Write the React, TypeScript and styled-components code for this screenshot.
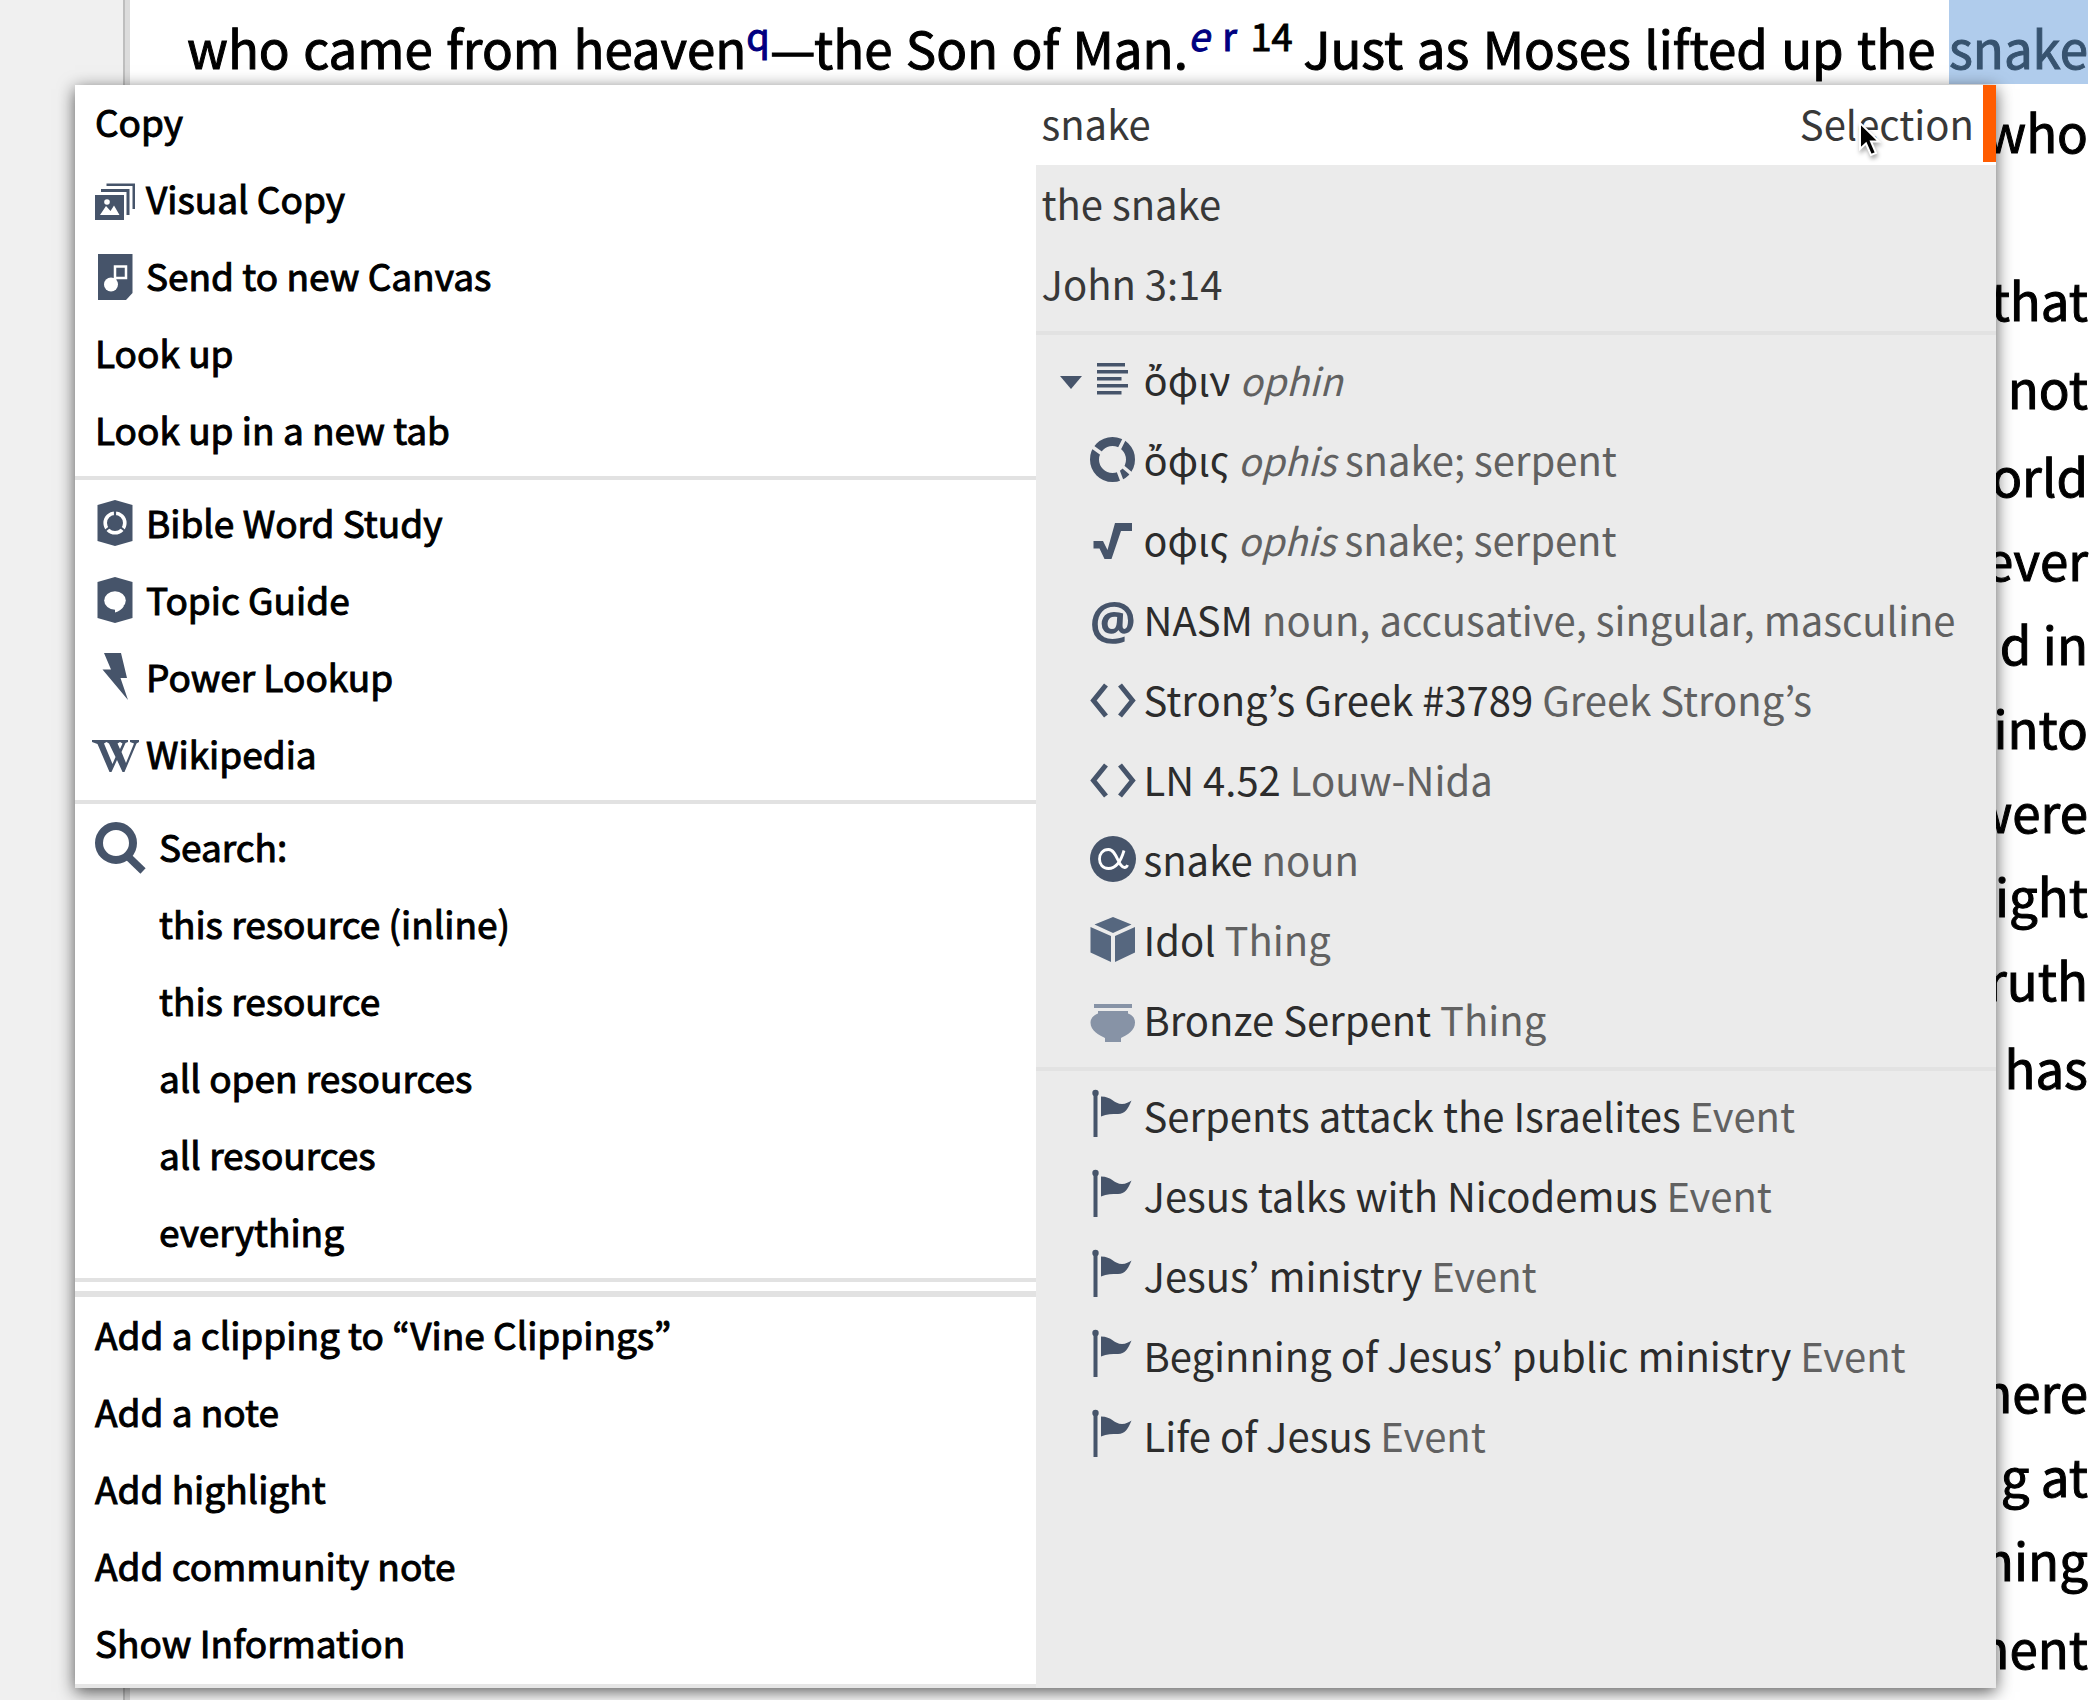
import React from "react";
import styled, { createGlobalStyle } from "styled-components";

const INK = "#46546a";

const GlobalStyle = createGlobalStyle`
  *, *::before, *::after { box-sizing: border-box; }
  body {
    margin: 0;
    background: #fff;
    font-family: "Noto Sans CJK JP", "Noto Sans", "Open Sans", sans-serif;
  }
`;

const Page = styled.div`
  position: relative;
  display: flex;
  min-height: 100vh;
  overflow: hidden;
`;

const Gutter = styled.aside`
  flex: 0 0 130px;
  background: #f0f0f0;
  border-right: 5px solid #dcdcdc;
  box-shadow: inset -2px 0 0 #bebebe;
`;

const Passage = styled.main`
  flex: 1;
  min-width: 0;
  padding: 5px 12px 0 57px;
  color: #000;
  font-size: 51px;
  font-weight: 400;
  -webkit-text-stroke-width: 1px;
`;

const Line = styled.p<{ $tall?: boolean; $full?: boolean; $before?: number }>`
  margin: ${(p) => p.$before ?? 0}px 0 0;
  height: ${(p) => (p.$tall ? 88 : 84)}px;
  padding-top: ${(p) => (p.$tall ? 4 : 0)}px;
  line-height: 84px;
  white-space: nowrap;
  text-align: right;
  text-align-last: ${(p) => (p.$full ? "justify" : "right")};
`;

const Raised = styled.span`
  position: relative;
  top: -18px;
  font-size: 38px;
  line-height: 1;
`;

const NoteLink = styled.a<{ $italic?: boolean }>`
  position: relative;
  top: -18px;
  color: #000080;
  font-size: 38px;
  font-style: ${(p) => (p.$italic ? "italic" : "normal")};
  line-height: 1;
  text-decoration: none;
`;

const Highlight = styled.mark`
  padding-top: 12px;
  background: #b0ccec;
  color: #37536f;
`;

const Menu = styled.div`
  position: absolute;
  top: 85px;
  left: 75px;
  right: 104px;
  display: grid;
  grid-template-columns: 1fr 1fr;
  background: #fff;
  box-shadow: 0 4px 16px rgba(0, 0, 0, 0.65);
`;

const Actions = styled.div`
  display: flex;
  flex-direction: column;
  padding-bottom: 1px;
  border-bottom: 4px solid #e6e6e6;
`;

const Targets = styled.div`
  display: flex;
  flex-direction: column;
  background: #ebebeb;
`;

const Divider = styled.hr<{ $heavy?: boolean }>`
  width: 100%;
  height: ${(p) => (p.$heavy ? 6 : 4)}px;
  margin: ${(p) => (p.$heavy ? "3px 0 1px" : "6px 0")};
  border: 0;
  background: #e2e2e2;
`;

const Action = styled.button<{ $indent?: boolean; $wide?: boolean }>`
  display: flex;
  align-items: center;
  gap: ${(p) => (p.$wide ? 12 : 11)}px;
  height: 77px;
  padding: 0 20px 5px ${(p) => (p.$indent ? 84 : 20)}px;
  border: 0;
  background: none;
  color: #000;
  font: 400 37px/72px "Noto Sans CJK JP", "Noto Sans", sans-serif;
  -webkit-text-stroke-width: 1px;
  text-align: left;
  white-space: nowrap;
`;

const Target = styled.button<{ $selected?: boolean; $nested?: boolean }>`
  position: relative;
  display: flex;
  align-items: center;
  justify-content: space-between;
  height: 80px;
  padding: 0 22px 4px ${(p) => (p.$nested ? 54 : 6)}px;
  border: 0;
  background: ${(p) => (p.$selected ? "#fff" : "none")};
  color: ${(p) => (p.$nested ? "#2c2c2c" : "#383838")};
  font: 400 40px/74px "Noto Sans CJK JP", "Noto Sans", sans-serif;
  text-align: left;
  white-space: nowrap;
`;

const SelectedBar = styled.span`
  position: absolute;
  top: 0;
  right: 0;
  width: 13px;
  height: 77px;
  background: #ff5c00;
`;

const Caret = styled.span`
  position: absolute;
  top: 35px;
  left: 24px;
  border: solid transparent;
  border-width: 13px 11px 0;
  border-top-color: ${INK};
`;

const Entry = styled.span`
  display: flex;
  align-items: center;
  gap: 8px;
`;

const Detail = styled.span`
  color: #616161;
`;

const Translit = styled.i`
  font-size: 38px;
`;

const AtMark = styled.span`
  width: 46px;
  color: ${INK};
  font-family: "Open Sans", "Noto Sans", sans-serif;
  font-size: 52px;
  font-weight: 700;
  line-height: 50px;
`;

const Glyph = styled.svg`
  display: block;
  flex: none;
  overflow: visible;
`;

const Pointer = styled.svg`
  position: absolute;
  top: 120px;
  right: 218px;
  filter: drop-shadow(1px 3px 2px rgba(0, 0, 0, 0.35));
`;

const SmallIcon = ({ children }: { children: React.ReactNode }) => (
  <Glyph width="40" height="50" viewBox="0 -1 40 50" fill={INK} aria-hidden="true">
    {children}
  </Glyph>
);

const EntryIcon = ({ children }: { children: React.ReactNode }) => (
  <Glyph width="46" height="50" viewBox="0 0 46 50" fill={INK} aria-hidden="true">
    {children}
  </Glyph>
);

const VisualCopyIcon = () => (
  <SmallIcon>
    <path d="M11.500 9.500H40V35H37.500V12H11.500Z" />
    <path d="M6 15H34.500V41H31.500V18H6Z" />
    <path fillRule="evenodd" d="M0 21H29V46H0ZM5 41H24.500L19 31.500L15.500 37L11 32Z" />
    <circle cx="12" cy="28" r="2.800" fill="#fff" />
  </SmallIcon>
);

const CanvasIcon = () => (
  <SmallIcon>
    <path d="M3 3H37.500V42L31 49H3Z" />
    <circle cx="16" cy="33.500" r="7" fill="#fff" />
    <path d="M20 34V15.500H31V27H20" fill="none" stroke="#fff" strokeWidth="2.500" />
  </SmallIcon>
);

const WordStudyIcon = () => (
  <SmallIcon>
    <path d="M2.500 7L20 2L37.500 7V43L20 48L2.500 43Z" />
    <circle cx="20" cy="25" r="9.800" fill="none" stroke="#fff" strokeWidth="3.600" />
    <path d="M20 12V20M8.500 34L15.500 28.500M31.500 34L24.500 28.500" stroke={INK} strokeWidth="2.200" />
  </SmallIcon>
);

const TopicIcon = () => (
  <SmallIcon>
    <path d="M2.500 7L20 2L37.500 7V43L20 48L2.500 43Z" />
    <ellipse cx="20" cy="25.500" rx="10.800" ry="9.300" fill="#fff" />
    <path d="M20 33V37.500C24 36.500 27 34 29 31Z" fill="#fff" />
  </SmallIcon>
);

const BoltIcon = () => (
  <SmallIcon>
    <path d="M9 1H26L32 26H25.500L33 48L7.500 17.500H16Z" />
  </SmallIcon>
);

const WikipediaIcon = () => (
  <SmallIcon>
    <path d="M-3 11H11.500V13L9 14.500L17.500 35L20.500 28L14 14.500L11.500 13V11H25V13L22.500 14.500L25 20L27.500 14.500L25 13V11H33V13L30.500 14L26.500 23L31 34L39 14.500L35 13V11H44V13L41.500 14.500L29.500 43H27.500L22 31L16.500 43H14.500L2.500 15L-3 13Z" />
  </SmallIcon>
);

const SearchIcon = () => (
  <Glyph width="52" height="54" viewBox="0 -2 52 54" fill="none" stroke={INK} aria-hidden="true">
    <circle cx="21" cy="22" r="17" strokeWidth="8" />
    <path d="M33.500 36L48 50" strokeWidth="7.500" />
  </Glyph>
);

const LinesIcon = () => (
  <EntryIcon>
    <path d="M7 9H35V12.500H7ZM7 16H38V19.500H7ZM7 23H31.500V26.500H7ZM7 30H38V33.500H7ZM7 37H31.500V40.500H7Z" />
  </EntryIcon>
);

const RingIcon = () => (
  <EntryIcon>
    <circle cx="22.500" cy="25.500" r="18" fill="none" stroke={INK} strokeWidth="9" />
    <path d="M28.500 16.500L35.500 2.500M11.500 19.500L.5 11.500M26.500 32.500L32.500 48.500M31.500 31.500L44.500 42.500" stroke="#ebebeb" strokeWidth="3.500" />
  </EntryIcon>
);

const RootIcon = () => (
  <EntryIcon>
    <path d="M3.500 27H13L17.500 36L25 9H42V17H31L21.500 45H14.500L9.500 34.500H3.500Z" />
  </EntryIcon>
);

const CodeIcon = () => (
  <EntryIcon>
    <path d="M16 11L3.500 26.500L16 42M30 11L42.500 26.500L30 42" fill="none" stroke={INK} strokeWidth="5" />
  </EntryIcon>
);

const AlphaIcon = () => (
  <EntryIcon>
    <circle cx="23" cy="25" r="23" />
    <path
      d="M34 16.500C31 27 26 34.500 18.500 34.500C12.500 34.500 9.500 30 9.500 25S12.500 15.500 18.500 15.500C27 15.500 28 33.500 34.500 33.500C36 33.500 37 32.500 37.500 31"
      fill="none"
      stroke="#fff"
      strokeWidth="2.800"
    />
  </EntryIcon>
);

const CubeIcon = () => (
  <EntryIcon>
    <path
      d="M23 3L41.500 10.500L23 19L4.500 10.500ZM.5 13L21 22V48L.5 38.500ZM45 13L25 22V48L45 38.500Z"
      fill="#56677f"
    />
  </EntryIcon>
);

const PotIcon = () => (
  <EntryIcon>
    <path
      d="M4 10H42V14H4ZM8 17H38V19.500C42 20.500 45 24 45 28.500C45 37 37 41 31 44V48H15V44C9 41 .5 37 .5 28.500C.5 24 4.500 20.500 8 19.500Z"
      fill="#8793a6"
    />
  </EntryIcon>
);

const FlagIcon = () => (
  <EntryIcon>
    <circle cx="5.500" cy="3" r="3.200" />
    <path d="M3.500 3H7.500V47H3.500ZM11 6.500C22 6.500 24 14 32 14C36 14 39 12 41.500 10.500C38 19 35 24 28 24C22 24 17 24 11 26.500Z" />
  </EntryIcon>
);

type ActionItem = { label: string; icon?: React.ReactNode; indent?: boolean; wide?: boolean };

const actionGroups: ActionItem[][] = [
  [
    { label: "Copy" },
    { label: "Visual Copy", icon: <VisualCopyIcon /> },
    { label: "Send to new Canvas", icon: <CanvasIcon /> },
    { label: "Look up" },
    { label: "Look up in a new tab" },
  ],
  [
    { label: "Bible Word Study", icon: <WordStudyIcon /> },
    { label: "Topic Guide", icon: <TopicIcon /> },
    { label: "Power Lookup", icon: <BoltIcon /> },
    { label: "Wikipedia", icon: <WikipediaIcon /> },
  ],
  [
    { label: "Search:", icon: <SearchIcon />, wide: true },
    { label: "this resource (inline)", indent: true },
    { label: "this resource", indent: true },
    { label: "all open resources", indent: true },
    { label: "all resources", indent: true },
    { label: "everything", indent: true },
  ],
];

const noteActions: ActionItem[] = [
  { label: "Add a clipping to “Vine Clippings”" },
  { label: "Add a note" },
  { label: "Add highlight" },
  { label: "Add community note" },
  { label: "Show Information" },
];

type EntryItem = {
  icon: React.ReactNode;
  label: string;
  translit?: string;
  detail?: string;
  open?: boolean;
};

const wordEntries: EntryItem[] = [
  { icon: <LinesIcon />, label: "ὄφιν", translit: "ophin", open: true },
  { icon: <RingIcon />, label: "ὄφις", translit: "ophis", detail: "snake; serpent" },
  { icon: <RootIcon />, label: "οφις", translit: "ophis", detail: "snake; serpent" },
  { icon: <AtMark aria-hidden="true">@</AtMark>, label: "NASM", detail: "noun, accusative, singular, masculine" },
  { icon: <CodeIcon />, label: "Strong’s Greek #3789", detail: "Greek Strong’s" },
  { icon: <CodeIcon />, label: "LN 4.52", detail: "Louw-Nida" },
  { icon: <AlphaIcon />, label: "snake", detail: "noun" },
  { icon: <CubeIcon />, label: "Idol", detail: "Thing" },
  { icon: <PotIcon />, label: "Bronze Serpent", detail: "Thing" },
];

const eventEntries: EntryItem[] = [
  "Serpents attack the Israelites",
  "Jesus talks with Nicodemus",
  "Jesus’ ministry",
  "Beginning of Jesus’ public ministry",
  "Life of Jesus",
].map((label) => ({ icon: <FlagIcon />, label, detail: "Event" }));

const lineEnds: { text: string; tall?: boolean; before?: number }[] = [
  { text: "who" },
  { text: "that", before: 84 },
  { text: "not", tall: true },
  { text: "world", tall: true },
  { text: "ever" },
  { text: "d in" },
  { text: "into" },
  { text: "were" },
  { text: "light" },
  { text: "truth" },
  { text: "has", tall: true },
  { text: "here", before: 240 },
  { text: "g at" },
  { text: "ming" },
  { text: "ment", tall: true },
];

const ActionRow = ({ item }: { item: ActionItem }) => (
  <Action type="button" role="menuitem" $indent={item.indent} $wide={item.wide}>
    {item.icon}
    {item.label}
  </Action>
);

const EntryRow = ({ item }: { item: EntryItem }) => (
  <Target type="button" role="menuitem" $nested aria-expanded={item.open}>
    {item.open && <Caret />}
    <Entry>
      {item.icon}
      <span>
        {item.label}{" "}
        {item.translit && (
          <Detail>
            <Translit>{item.translit}</Translit>{" "}
          </Detail>
        )}
        {item.detail && <Detail>{item.detail}</Detail>}
      </span>
    </Entry>
  </Target>
);

export default function App() {
  return (
    <Page>
      <GlobalStyle />
      <Gutter />
      <Passage>
        <Line $full>
          who came from heaven<NoteLink href="#q">q</NoteLink>—the Son of Man.
          <NoteLink href="#e" $italic>e</NoteLink> <NoteLink href="#r">r</NoteLink>{" "}
          <Raised>14 </Raised>Just as Moses lifted up the <Highlight>snake</Highlight>
        </Line>
        {lineEnds.map((line) => (
          <Line key={line.text} $tall={line.tall} $before={line.before}>
            {line.text}
          </Line>
        ))}
      </Passage>
      <Menu role="menu">
        <Actions>
          {actionGroups.map((group, index) => (
            <React.Fragment key={index}>
              {group.map((item) => (
                <ActionRow key={item.label} item={item} />
              ))}
              <Divider />
            </React.Fragment>
          ))}
          <Divider $heavy />
          {noteActions.map((item) => (
            <ActionRow key={item.label} item={item} />
          ))}
        </Actions>
        <Targets>
          <Target type="button" role="menuitem" $selected>
            <span>snake</span>
            <span>Selection</span>
            <SelectedBar />
          </Target>
          <Target type="button" role="menuitem">the snake</Target>
          <Target type="button" role="menuitem">John 3:14</Target>
          <Divider />
          {wordEntries.map((item, index) => (
            <EntryRow key={index} item={item} />
          ))}
          <Divider />
          {eventEntries.map((item) => (
            <EntryRow key={item.label} item={item} />
          ))}
        </Targets>
      </Menu>
      <Pointer width="24" height="38" viewBox="0 0 24 38" aria-hidden="true">
        <path
          d="M2 3V29L8 23.500L13 35L18 33L13 21.500H21Z"
          fill="#000"
          stroke="#fff"
          strokeWidth="2"
        />
      </Pointer>
    </Page>
  );
}
